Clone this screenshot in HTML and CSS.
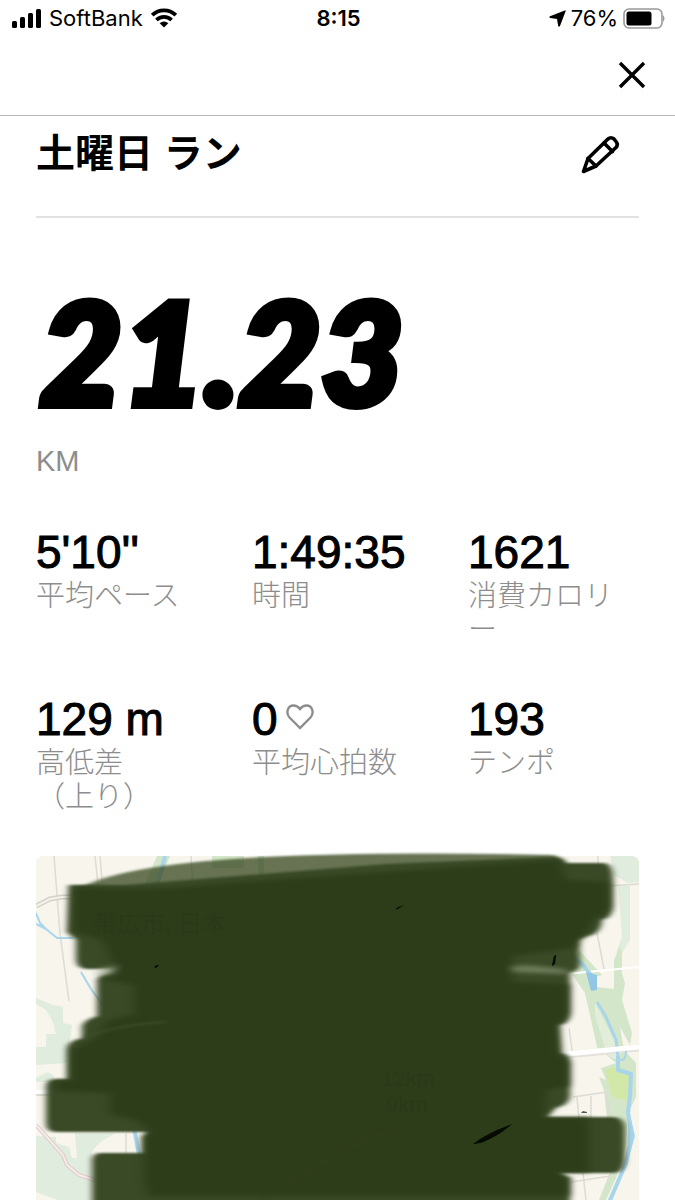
FILE: index.html
```
<!DOCTYPE html>
<html lang="ja">
<head>
    <meta charset="UTF-8">
    <meta name="viewport" content="width=device-width, initial-scale=1.0">
    <title>土曜日 ラン</title>
    <link rel="stylesheet" href="styles.css">
</head>
<body>

    <div class="status-bar">
        <div class="status-left">
            <svg class="signal" width="30" height="19" viewBox="0 0 30 19" aria-hidden="true">
                <rect x="0" y="12" width="5" height="7" rx="1.5"/>
                <rect x="8" y="8" width="5" height="11" rx="1.5"/>
                <rect x="16" y="4" width="5" height="15" rx="1.5"/>
                <rect x="24" y="0" width="5" height="19" rx="1.5"/>
            </svg>
            <span>SoftBank</span>
            <svg class="wifi" width="28" height="20" viewBox="0 0 28 20" aria-hidden="true">
                <path d="M2.200 7.200a17 17 0 0 1 23.600 0M6.400 12a11 11 0 0 1 15.200 0" fill="none" stroke="#000" stroke-width="3.800"/>
                <path d="M14 19.500l-4.300-4.200a6.200 6.200 0 0 1 8.600 0z"/>
            </svg>
        </div>
        <div class="status-time">8:15</div>
        <div class="status-right">
            <svg class="location" width="17" height="17" viewBox="0 0 17 17" aria-hidden="true">
                <path d="M15.800 .4Q17 0 16.600 1.200L11 16Q10 17.500 9.200 16L8 9 1.200 8Q-.5 7 1 6.200z"/>
            </svg>
            <span>76%</span>
            <svg class="battery" width="42" height="21" viewBox="0 0 42 21" aria-hidden="true">
                <rect x="1" y="1" width="38" height="19" rx="5" fill="none" stroke="#999" stroke-width="1.600"/>
                <rect x="3.500" y="3.500" width="25" height="14" rx="2.500"/>
                <path d="M40 7q3 3.500 0 7z" fill="#999"/>
            </svg>
        </div>
    </div>

    <header class="top-nav">
        <button type="button" class="icon-button" aria-label="閉じる">
            <svg width="28" height="28" viewBox="0 0 28 28"><path d="M2 2l24 24M26 2L2 26" fill="none" stroke="#000" stroke-width="3.400"/></svg>
        </button>
    </header>

    <main class="container">
        <div class="title-row">
            <h1>土曜日 ラン</h1>
            <button type="button" class="icon-button" aria-label="編集">
                <svg width="40" height="40" viewBox="0 0 40 40" fill="none" stroke="#000" stroke-width="3.600" stroke-linejoin="round" stroke-linecap="round">
                    <path d="M3.500 36.500L8 23.500 28 4Q31 1.500 34 4L36 6.500Q38.500 9.500 36 12.500L16 31z"/>
                    <path d="M24 8l8.500 8.500M8 23.500l8 7.500"/>
                </svg>
            </button>
        </div>

        <div class="distance">21.23</div>
        <div class="distance-unit">KM</div>

        <dl class="stats">
            <div class="stat">
                <dd>5'10''</dd>
                <dt>平均ペース</dt>
            </div>
            <div class="stat">
                <dd>1:49:35</dd>
                <dt>時間</dt>
            </div>
            <div class="stat">
                <dd>1621</dd>
                <dt>消費カロリー</dt>
            </div>
            <div class="stat">
                <dd>129 m</dd>
                <dt>高低差<br>（上り）</dt>
            </div>
            <div class="stat">
                <dd>0
                    <svg class="heart" width="28" height="26" viewBox="0 0 28 26" aria-hidden="true">
                        <path d="M14 24L3.500 13.500C-.5 9 1.500 1.500 7.500 1.500 10.500 1.500 12.500 3 14 5 15.500 3 17.500 1.500 20.500 1.500 26.500 1.500 28.500 9 24.500 13.500z" fill="none" stroke="#8d8d8d" stroke-width="2.400"/>
                    </svg>
                </dd>
                <dt>平均心拍数</dt>
            </div>
            <div class="stat">
                <dd>193</dd>
                <dt>テンポ</dt>
            </div>
        </dl>

        <svg class="map" viewBox="0 0 603 344" role="img" aria-label="ルートマップ">
            <defs>
                <clipPath id="card"><path d="M0 344V8Q0 0 8 0H595Q603 0 603 8V344z"/></clipPath>
                <clipPath id="paint-area"><rect x="0" y="-10" width="603" height="354"/></clipPath>
                <filter id="soft" x="-10%" y="-10%" width="120%" height="120%" color-interpolation-filters="sRGB"><feGaussianBlur stdDeviation="3 1"/></filter>
                <filter id="softer" x="-20%" y="-50%" width="140%" height="200%" color-interpolation-filters="sRGB"><feGaussianBlur stdDeviation="5 2"/></filter>
            </defs>

            <!-- map -->
            <g clip-path="url(#card)">
                <rect width="603" height="344" fill="#f7f5ec"/>
                <g fill="#e0ecdd">
                    <path d="M0 142l17 7 10 2v16l9 2-5 38-31 2v-18h10v-13h11l2 13-6-25-7-12-10-6z"/>
                    <path d="M0 222l12-6 6 4v6H0z"/>
                    <path d="M0 280l20 1v6l13 4 3 11h5l-2-25h41q-20 10-24 19v48H22L0 336z"/>
                    <path d="M574 0h29v26l-11 1-14-8z"/>
                    <path d="M582 28l12 2v54l-8 13h-6l6-16z"/>
                </g>
                <g fill="#d4e6c9">
                    <path d="M121 0h13l-13 32h-14zM176 0h32v12h-32zM222 0h6v28h-6z"/>
                    <path d="M586 97v20l3 10-3 17 10 33-2 12-10-18 4 23 12 13v34l-8 16-2 30-10 35-10 22h-7l13-33-8-77-5-13 7 3-5-12 15-5-19-16-12-54-14-20 8-23 23 25-9 3 4 9 17 2v-29l6-14z"/>
                    <path d="M559 146l24 48 2 12-14-7-12-40z" fill="#e2edda"/>
                </g>
                <path d="M569 214l13-5 13 10-3 26-16-4z" fill="#d2e8a8"/>
                <g stroke="#dddbd4" fill="none">
                    <path d="M18 0l6 78 9 67M59 0l4 38M64 0l3 35M155 0l2 30M562 0v8M561 77l7 36M533 172l4 29M537 241l34-5M541 241l2 22M555 240v23M570 236l4 27M535 326l40-6M547 317l3 27M572 30l31-2M90 277v22" stroke-width="1.500"/>
                    <path d="M0 50l14-7 12-2h20" stroke-width="5" stroke="#d4d1c9"/>
                    <path d="M0 50l14-7 12-2h20" stroke-width="2" stroke="#f4f2eb"/>
                    <path d="M0 238h30" stroke-width="4"/>
                    <path d="M0 236h30" stroke="#fff" stroke-width="4"/>
                    <path d="M0 269l27 30 4 10 12 10 16 5" stroke="#e0c9c9" stroke-width="4"/>
                    <path d="M0 269l27 30 4 10 12 10 16 5" stroke="#f3edeb" stroke-width="2"/>
                    <path d="M530 118l73-7" stroke="#fff" stroke-width="2"/>
                    <path d="M520 200l83-8" stroke="#e4e2da" stroke-width="7"/>
                </g>
                <g stroke="#a8d5eb" fill="none" stroke-width="2" stroke-linejoin="round">
                    <path d="M0 57l4 10 6 6 11 9h16M0 68l10 5M45 116l10 17 20 27"/>
                    <path d="M129 0l-7 27M97 267l6 31" stroke-width="4"/>
                    <path d="M535 99l12 10 8 10" stroke-width="4"/>
                    <path d="M561 146l9 15 10 23 2 17v13" stroke-width="3"/>
                    <path d="M582 200v14l13 4-1 22-2 17 4 24-6 26-18 42" stroke-width="4"/>
                    <path d="M582 203q8 4 8-9"/>
                </g>
                <path d="M550 116l11 3v15l-6 1z" fill="#91c7e5"/>
                <path d="M593 254l6 26-8 27z" fill="#a8d5eb"/>
                <path d="M520 199l83-8" stroke="#fff" stroke-width="5"/>
                <path d="M545 257l2-2 4 1v1z" fill="#555"/>
            </g>

            <!-- marker strokes -->
            <g clip-path="url(#paint-area)">
                <path d="M46 31Q90 8 229 1 340-5 519-1L527 8 527 18 340 32 100 38z" fill="#35471e" opacity=".74" filter="url(#soft)"/>
                <path d="M33 29H90L350 8 520 1Q528 2 530 7H568Q577 8 577 22V50Q576 62 566 64 565 78 552 80L543 84 544 108Q544 114 534 117V156Q533 168 523 169L525 197Q534 198 534 207V240Q533 249 520 252L511 261H578Q589 262 589 274V304Q588 317 577 317H523L534 322V352H56V304Q57 297 64 297H107V281L112 276H20Q10 276 10 267V231Q10 224 18 223H31V192Q32 185 46 182V171Q46 165 61 160V125Q62 118 78 118V113H50Q40 112 40 103V84L31 76z" fill="#3a4a27" filter="url(#soft)"/>
                <path d="M38 31Q110 36 180 28L347 16 523 4 530 24 572 26V50Q571 60 560 61 554 74 545 80L538 92 476 100 476 126 532 128V156Q530 166 521 168L523 198 532 206V230L511 234 508 262H553V316H521L532 322V340H112L108 320V281L114 274 100 264 74 258V237L20 235V225H36V194L60 182 72 164 98 158V130L66 122 78 108 66 84 38 76z" fill="#2d3d1a" filter="url(#softer)"/>
                <path d="M476 110q20-2 56 4v4l-56-2z" fill="#7c8a68" opacity=".8" filter="url(#softer)"/>
                <path d="M62 113l20-4-4 9-18 2z" fill="#a3ac94" opacity=".6" filter="url(#softer)"/>
                <path d="M50 181q30-12 80-15" fill="none" stroke="#3d4c29" stroke-width="2" filter="url(#soft)"/>
                <path d="M225 344l20-14 60-34 65-30" fill="none" stroke="#333d18" stroke-width="7" opacity=".4" filter="url(#soft)"/>
                <g class="map-text" fill="#2a3919">
                    <text class="place" x="57" y="76">帯広市, 日本</text>
                    <text x="345" y="230">12km</text>
                    <text x="350" y="256">9km</text>
                </g>
                <g fill="#050a02">
                    <path d="M437 288q12-10 39-20-13 12-31 19z"/>
                    <path d="M516 109l2-9q3-2 2 0l-1 8-3 2z"/>
                    <path d="M360 53l2-2 7-2q-5 2-9 5zM118 111l3-2 2 0-3 3z"/>
                </g>
            </g>
        </svg>
    </main>

</body>
</html>
```
FILE: styles.css
```
html, body { height: 100%; }
body { font-family: "Liberation Sans", "Noto Sans CJK JP", sans-serif; margin: 0; background: #fff; color: #000; overflow-x: hidden; }
h1, dl, dd, dt { margin: 0; }
svg { display: block; flex-shrink: 0; }

.status-bar {
    display: grid;
    grid-template-columns: 1fr auto 1fr;
    align-items: center;
    height: 36px;
    padding: 0 10px 0 12px;
    font-family: Inter, sans-serif;
    font-size: 22px;
}
.status-left, .status-right { display: flex; align-items: center; }
.status-left { gap: 7px; }
.status-right { justify-content: flex-end; gap: 5px; }
.status-time { font-weight: 600; }

.top-nav {
    display: flex;
    justify-content: flex-end;
    align-items: center;
    height: 77px;
    padding: 0 29px 2px;
    border-bottom: 1px solid #b8b8b8;
}
.icon-button { border: none; background: none; padding: 0; cursor: pointer; }

.container { padding: 0 36px; }
.title-row {
    display: flex;
    justify-content: space-between;
    align-items: center;
    height: 78px;
    padding: 0 19px 22px 0;
    border-bottom: 2px solid #e2e2e2;
}
h1 { padding-bottom: 2px; font-size: 39px; line-height: 50px; font-weight: 700; }

.distance {
    margin-top: 60px;
    padding-left: 4px;
    font-family: Lato, sans-serif;
    font-size: 142px;
    line-height: 144px;
    font-weight: 900;
    font-style: italic;
    -webkit-text-stroke: 8px #000;
}
.distance-unit { margin-top: 22px; font-size: 29px; line-height: 34px; color: #8d8d8d; }

.stats {
    display: grid;
    grid-template-columns: repeat(3, 1fr);
    gap: 48px 45px;
    margin: 50px 0 42px;
}
.stat { display: flex; flex-direction: column; gap: 3px; }
.stat dd {
    display: flex;
    align-items: center;
    gap: 8px;
    font-size: 46px;
    line-height: 48px;
    white-space: nowrap;
    -webkit-text-stroke: 1px #000;
}
.heart { margin-bottom: 4px; }
.stat dt {
    font-size: 29px;
    line-height: 34px;
    font-weight: 300;
    color: #8d8d8d;
}

.map { width: 100%; height: auto; overflow: visible; }
.map-text { font-size: 22px; }
.place { font-size: 24px; }
```
